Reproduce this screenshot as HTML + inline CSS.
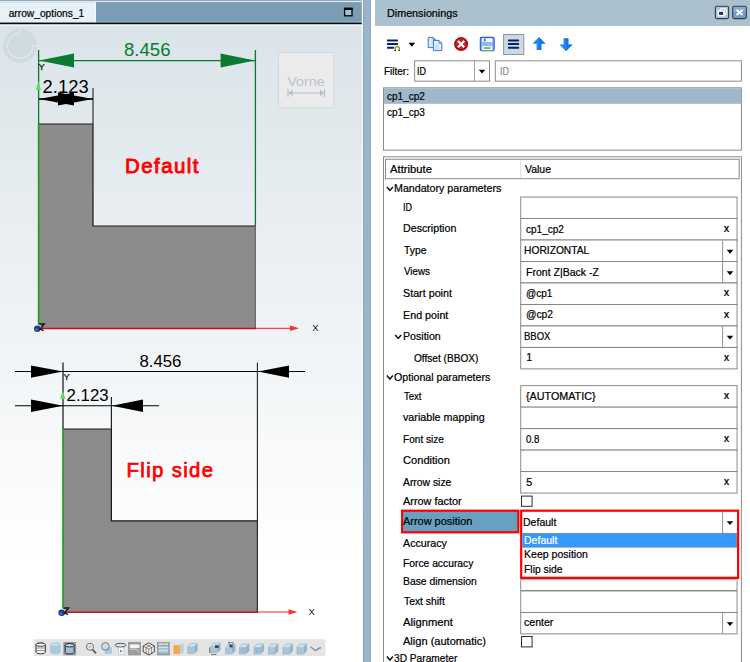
<!DOCTYPE html>
<html><head><meta charset="utf-8"><title>Dimensionings</title>
<style>
html,body{margin:0;padding:0;background:#fff;}
body{width:750px;height:662px;position:relative;overflow:hidden;font-family:"Liberation Sans",sans-serif;}
.t{position:absolute;white-space:nowrap;line-height:14px;font-family:"Liberation Sans",sans-serif;transform-origin:0 50%;-webkit-text-stroke:0.22px currentColor;}
.b{position:absolute;box-sizing:border-box;}
svg{position:absolute;left:0;top:0;}
</style></head><body>

<svg width="375" height="662" viewBox="0 0 375 662" font-family="Liberation Sans, sans-serif">
<defs>
<linearGradient id="bg" x1="0" y1="0" x2="0" y2="1">
<stop offset="0" stop-color="#dbe4e9"/>
<stop offset="0.84" stop-color="#ffffff"/>
<stop offset="1" stop-color="#ffffff"/>
</linearGradient>
</defs>
<!-- frame -->
<rect x="0" y="0" width="371" height="662" fill="#9ab5cb"/>
<rect x="0" y="0" width="362" height="1.2" fill="#8fa9bd"/>
<rect x="0" y="1.2" width="362" height="1" fill="#f4f8fa"/>
<rect x="0" y="2.2" width="362" height="20.6" fill="#7b9db3"/>
<rect x="0" y="2.2" width="95" height="20.6" fill="#e6f1f8"/>
<rect x="95" y="2.2" width="1" height="20.6" fill="#f4f8fa"/>
<rect x="96" y="21.7" width="266" height="1" fill="#a4c8e6"/>
<rect x="0" y="22.6" width="362" height="1.8" fill="#0a0a0a"/>
<rect x="0" y="24.4" width="362" height="1.6" fill="#f2f5f7"/>
<rect x="0" y="26" width="362" height="636" fill="url(#bg)"/>
<rect x="361.8" y="0" width="1.3" height="662" fill="#f4f8fa"/><rect x="363.1" y="0" width="1" height="662" fill="#89a7c0"/>
<rect x="370" y="0" width="1" height="662" fill="#8eabc3"/>
<rect x="371" y="0" width="4" height="662" fill="#ffffff"/>
<!-- maximize icon -->
<rect x="344.6" y="8.4" width="7.4" height="7.4" fill="#9fc4dc" stroke="#000" stroke-width="1.3"/>
<rect x="344" y="7.8" width="8.6" height="2.2" fill="#000"/>

<text x="8.7" y="16.8" font-size="10.7" fill="#000" stroke="#000" stroke-width="0.2" textLength="75.6" lengthAdjust="spacingAndGlyphs">arrow_options_1</text>
<circle cx="20" cy="45.9" r="17" fill="#cfdae1"/>
<path d="M20 28.9 V33.4 A12.5 12.5 0 1 0 32.5 45.9 H37" fill="none" stroke="#e2eaef" stroke-width="1.1"/>

<g>
<!-- gray L shape -->
<path d="M39 124 H93 V226 H255.5 V328 H39 Z" fill="#8c8c8c"/>
<path d="M39 124 H93 V226 H255.5" fill="none" stroke="#1a1a1a" stroke-width="1.2"/>
<line x1="255.3" y1="226" x2="255.3" y2="328" stroke="#555" stroke-width="1"/>
<!-- green ext lines -->
<line x1="38.6" y1="50" x2="38.6" y2="124" stroke="#0b7a30" stroke-width="1.3"/>
<line x1="38.6" y1="124" x2="38.6" y2="328" stroke="#15a015" stroke-width="1.6"/>
<line x1="255.4" y1="50" x2="255.4" y2="226" stroke="#0b7a30" stroke-width="1.3"/>
<line x1="39" y1="60.6" x2="255" y2="60.6" stroke="#0b7a30" stroke-width="1.2"/>
<path d="M39 60.6 L74 53.6 V67.6 Z" fill="#0b7a30"/>
<path d="M255 60.6 L220.6 53.6 V67.6 Z" fill="#0b7a30"/>
<text x="124" y="55.6" font-size="18.6" fill="#0b7a30">8.456</text>
<!-- y label, small green arrow -->
<text x="38.6" y="70" font-size="9.4" fill="#111" stroke="#111" stroke-width="0.25">Y</text>
<path d="M38.4 81 L35.8 90 H41 Z" fill="#5ae05a"/>
<!-- 2.123 -->
<text x="42.6" y="93" font-size="18.4" fill="#000">2.123</text>
<line x1="93" y1="88" x2="93" y2="124" stroke="#333" stroke-width="1.2"/>
<line x1="39" y1="99" x2="93" y2="99" stroke="#000" stroke-width="1.4"/>
<path d="M39 99 L74 92.4 V105.6 Z" fill="#000"/>
<path d="M93 99 L58 92.4 V105.6 Z" fill="#000"/>
<!-- red x axis -->
<line x1="39" y1="328.4" x2="256" y2="328.4" stroke="#c41212" stroke-width="1.5"/>
<line x1="256" y1="328.3" x2="291" y2="328.3" stroke="#ff4545" stroke-width="1.2"/>
<path d="M299 328.3 L290 325.5 V331.1 Z" fill="#ff3030"/>
<text x="312.2" y="331.4" font-size="9.5" fill="#111">X</text>
<!-- origin -->
<circle cx="37.3" cy="328.7" r="4.3" fill="#f4f7f9" opacity=".9"/><circle cx="37.3" cy="328.7" r="3.3" fill="#1f3a80"/><circle cx="36.7" cy="329.6" r="1.4" fill="#3a74c8"/><path d="M39.2 324.0 H44.2 L40.2 329.0 L43.6 330.7" fill="none" stroke="#16161c" stroke-width="1.4"/>
<text x="124.9" y="173.1" font-size="20.5" fill="#ff0000" stroke="#ff0000" stroke-width="0.9" stroke-linejoin="round" letter-spacing="1.45">Default</text>
</g>

<rect x="278.5" y="52.5" width="55.5" height="55.5" fill="#ebebeb" stroke="#d2d8dc" stroke-width="1"/>
<text x="287.4" y="86" font-size="13.6" fill="#bcc3ca" textLength="37.2" lengthAdjust="spacingAndGlyphs">Vorne</text>
<g stroke="#b4bfcc" stroke-width="1.2" fill="none">
<line x1="288" y1="93" x2="324.5" y2="93"/>
<line x1="288" y1="89" x2="288" y2="97"/>
<line x1="324.5" y1="89" x2="324.5" y2="97"/>
</g>
<path d="M288.6 93 l4 -3.2 v6.4 Z M324 93 l-4 -3.2 v6.4 Z" fill="#b4bfcc"/>

<g>
<path d="M63 429 H111.4 V520.8 H257.4 V612 H63 Z" fill="#8b8b8b"/>
<path d="M63 429 H111.4 V520.8 H257.4" fill="none" stroke="#1a1a1a" stroke-width="1.2"/>
<line x1="257.4" y1="362.4" x2="257.4" y2="612" stroke="#222" stroke-width="1.1"/>
<line x1="63" y1="362.4" x2="63" y2="429" stroke="#111" stroke-width="1.2"/>
<line x1="63" y1="429" x2="63" y2="612" stroke="#15a015" stroke-width="1.6"/>
<line x1="111.4" y1="397" x2="111.4" y2="429" stroke="#222" stroke-width="1.2"/>
<!-- dim line 1 -->
<line x1="15" y1="371.5" x2="305" y2="371.5" stroke="#000" stroke-width="1.1"/>
<path d="M63 371.5 L31 365.4 V377.8 Z" fill="#000"/>
<path d="M258 371.5 L289 365.4 V377.8 Z" fill="#000"/>
<text x="139.4" y="367" font-size="16.8" fill="#000">8.456</text>
<!-- dim line 2 -->
<line x1="15" y1="405.8" x2="159" y2="405.8" stroke="#000" stroke-width="1.1"/>
<path d="M63 405.8 L31 399.6 V412 Z" fill="#000"/>
<path d="M112 405.8 L143 399.6 V412 Z" fill="#000"/>
<text x="66.6" y="401.4" font-size="16.8" fill="#000">2.123</text>
<text x="63.6" y="380.2" font-size="9.4" fill="#111" stroke="#111" stroke-width="0.25">Y</text>
<path d="M62.8 390.6 L60.2 399 H65.4 Z" fill="#5ae05a"/>
<!-- red axis -->
<line x1="63" y1="612.3" x2="258" y2="612.3" stroke="#c41212" stroke-width="1.5"/>
<line x1="258" y1="612" x2="290" y2="612" stroke="#ff4545" stroke-width="1.2"/>
<path d="M297.5 612 L288.5 609.2 V614.8 Z" fill="#ff3030"/>
<text x="308.6" y="615.2" font-size="9.5" fill="#111">X</text>
<circle cx="61.7" cy="612.7" r="4.3" fill="#f4f7f9" opacity=".9"/><circle cx="61.7" cy="612.7" r="3.3" fill="#1f3a80"/><circle cx="61.1" cy="613.6" r="1.4" fill="#3a74c8"/><path d="M63.6 608.0 H68.6 L64.6 613.0 L68.0 614.7" fill="none" stroke="#16161c" stroke-width="1.4"/>
<text x="126.6" y="476.9" font-size="20.3" fill="#ff0000" stroke="#ff0000" stroke-width="0.75" stroke-linejoin="round" letter-spacing="1.35">Flip side</text>
</g>

<rect x="33.6" y="639.2" width="291.8" height="16.8" fill="#e4e4e4"/>
<path d="M36.0 644.7 V652.1 A4.7 1.7 0 0 0 45.4 652.1 V644.7 A4.7 1.7 0 0 0 36.0 644.7 Z" fill="#fafafa" stroke="#3a3a3a" stroke-width="1.0"/><ellipse cx="40.7" cy="644.7" rx="4.7" ry="1.7" fill="#fafafa" stroke="#3a3a3a" stroke-width="1.0"/>
<path d="M36.2 648 h9 M36.2 650.6 h9" stroke="#666" stroke-width=".7"/>
<path d="M50.6 644.7 V652.1 A4.8 1.7 0 0 0 60.2 652.1 V644.7 A4.8 1.7 0 0 0 50.6 644.7 Z" fill="#a9cbe0" stroke="#9bbdd4" stroke-width="0.6"/><ellipse cx="55.4" cy="644.7" rx="4.8" ry="1.7" fill="#c9deea" stroke="#9bbdd4" stroke-width="0.6"/>
<rect x="63.3" y="642" width="12.8" height="13.3" fill="#9a9a9a"/>
<path d="M65.2 645.3 V652.3 A4.5 1.7 0 0 0 74.2 652.3 V645.3 A4.5 1.7 0 0 0 65.2 645.3 Z" fill="#9ec0d8" stroke="#2e2e2e" stroke-width="1.0"/><ellipse cx="69.7" cy="645.3" rx="4.5" ry="1.7" fill="#c4dae8" stroke="#2e2e2e" stroke-width="1.0"/>
<circle cx="90" cy="646.8" r="3.5" fill="#eef2f4" stroke="#6a6a6a" stroke-width="1"/><path d="M92.6 649.6 L96 653.4" stroke="#555" stroke-width="1.6"/><path d="M88.2 646.8 h3.6 M90 645 v3.6" stroke="#999" stroke-width=".6"/>
<rect x="104.8" y="647.4" width="7" height="6.4" fill="#a9c9df"/><circle cx="105.4" cy="646.4" r="3.8" fill="#c9dce8" fill-opacity=".7" stroke="#7a7a7a" stroke-width="1"/>
<ellipse cx="120.4" cy="645.2" rx="5.4" ry="1.9" fill="none" stroke="#555" stroke-width="1"/><rect x="118.4" y="647.6" width="5.6" height="6.6" fill="#fdfdfd" stroke="#9ab" stroke-width=".5"/><path d="M120.2 649.6 l2.4 1.6 l-2.4 1.6 Z" fill="#3a7fc0"/>
<rect x="128" y="642" width="13" height="13.3" fill="#9a9a9a"/><rect x="129.8" y="644.4" width="9.6" height="3.6" fill="#f4f4f4"/><path d="M129.8 649.2 h7 M136.4 649.2 l3 3.4" stroke="#dcdcdc" stroke-width="1"/><rect x="129.6" y="651" width="5" height="2.6" fill="#a0a0a0"/>
<path d="M148.8 642.8 L154.4 646 V651.8 L148.8 655 L143.2 651.8 V646 Z" fill="#f2f2f2" stroke="#222" stroke-width=".8"/><path d="M143.2 646 L148.8 649.2 L154.4 646 M148.8 649.2 V655 M146 644.4 L151.6 647.6 V653.4 M151.6 644.4 L146 647.6 V653.4" fill="none" stroke="#333" stroke-width=".55"/>
<rect x="157" y="642" width="12.8" height="13.3" fill="#9a9a9a"/><rect x="158.6" y="643.2" width="9.6" height="1.6" fill="#d8e6ee"/><rect x="158.6" y="645.6" width="9.6" height="7.8" fill="#9fc3dc"/><path d="M158.6 647.4 h9.6 M158.6 650.6 h9.6" stroke="#dceaf2" stroke-width=".9"/><rect x="161.2" y="642.6" width="4.4" height=".9" fill="#e0a050"/>
<path d="M173.4 645.2 L176.6 643.2 H183.6 L180.4 645.2 Z" fill="#d6e6ef"/><path d="M173.4 645.2 H180.4 V654 H173.4 Z" fill="#f0a94e"/><path d="M180.4 645.2 L183.6 643.2 V652 L180.4 654 Z" fill="#b4d0e0"/>
<path d="M187.8 646.4 L190.8 643.4 H197.2 L194.2 646.4 Z" fill="#cfe2ee"/><path d="M187.8 646.4 H194.2 V653.4 H187.8 Z" fill="#a7c7db"/><path d="M194.2 646.4 L197.2 643.4 V650.4 L194.2 653.4 Z" fill="#8fb4cc"/><path d="M187.8 646.4 L190.8 643.4 H197.2 V650.4 L194.2 653.4 H187.8 Z" fill="none" stroke="#86a9c0" stroke-width=".6"/>
<path d="M210.6 646.3 L213.7 643.2 H220.2 L217.1 646.3 Z" fill="#cfe2ee"/><path d="M210.6 646.3 H217.1 V652.8 H210.6 Z" fill="#a7c7db"/><path d="M217.1 646.3 L220.2 643.2 V649.7 L217.1 652.8 Z" fill="#8fb4cc"/><path d="M210.6 646.3 L213.7 643.2 H220.2 V649.7 L217.1 652.8 H210.6 Z" fill="none" stroke="#86a9c0" stroke-width=".6"/>
<rect x="215" y="645.2" width="3.6" height="2.8" fill="#3c4650"/><path d="M209.6 647.4 v5.6 M211 654.6 h5.4" stroke="#555" stroke-width=".8"/>
<path d="M225.6 647.4 L228.6 644.4 H235.0 L232.0 647.4 Z" fill="#cfe2ee"/><path d="M225.6 647.4 H232.0 V653.8 H225.6 Z" fill="#a7c7db"/><path d="M232.0 647.4 L235.0 644.4 V650.8 L232.0 653.8 Z" fill="#8fb4cc"/><path d="M225.6 647.4 L228.6 644.4 H235.0 V650.8 L232.0 653.8 H225.6 Z" fill="none" stroke="#86a9c0" stroke-width=".6"/>
<rect x="229.4" y="644.6" width="3.4" height="2.8" fill="#3c4650"/><path d="M228 642.6 h5.4 v2 M229 641.8 v3" fill="none" stroke="#555" stroke-width=".6"/>
<path d="M239.4 647.1 L242.5 644.0 H249.0 L245.9 647.1 Z" fill="#cfe2ee"/><path d="M239.4 647.1 H245.9 V654.0 H239.4 Z" fill="#a7c7db"/><path d="M245.9 647.1 L249.0 644.0 V650.9 L245.9 654.0 Z" fill="#8fb4cc"/><path d="M239.4 647.1 L242.5 644.0 H249.0 V650.9 L245.9 654.0 H239.4 Z" fill="none" stroke="#86a9c0" stroke-width=".6"/>
<path d="M254.0 647.1 L257.1 644.0 H263.6 L260.5 647.1 Z" fill="#cfe2ee"/><path d="M254.0 647.1 H260.5 V654.0 H254.0 Z" fill="#a7c7db"/><path d="M260.5 647.1 L263.6 644.0 V650.9 L260.5 654.0 Z" fill="#8fb4cc"/><path d="M254.0 647.1 L257.1 644.0 H263.6 V650.9 L260.5 654.0 H254.0 Z" fill="none" stroke="#86a9c0" stroke-width=".6"/>
<path d="M268.4 647.1 L271.5 644.0 H278.0 L274.9 647.1 Z" fill="#cfe2ee"/><path d="M268.4 647.1 H274.9 V654.0 H268.4 Z" fill="#a7c7db"/><path d="M274.9 647.1 L278.0 644.0 V650.9 L274.9 654.0 Z" fill="#8fb4cc"/><path d="M268.4 647.1 L271.5 644.0 H278.0 V650.9 L274.9 654.0 H268.4 Z" fill="none" stroke="#86a9c0" stroke-width=".6"/>
<path d="M283.0 647.1 L286.1 644.0 H292.6 L289.5 647.1 Z" fill="#cfe2ee"/><path d="M283.0 647.1 H289.5 V654.0 H283.0 Z" fill="#a7c7db"/><path d="M289.5 647.1 L292.6 644.0 V650.9 L289.5 654.0 Z" fill="#8fb4cc"/><path d="M283.0 647.1 L286.1 644.0 H292.6 V650.9 L289.5 654.0 H283.0 Z" fill="none" stroke="#86a9c0" stroke-width=".6"/>
<path d="M297.0 647.1 L300.1 644.0 H306.6 L303.5 647.1 Z" fill="#cfe2ee"/><path d="M297.0 647.1 H303.5 V654.0 H297.0 Z" fill="#a7c7db"/><path d="M303.5 647.1 L306.6 644.0 V650.9 L303.5 654.0 Z" fill="#8fb4cc"/><path d="M297.0 647.1 L300.1 644.0 H306.6 V650.9 L303.5 654.0 H297.0 Z" fill="none" stroke="#86a9c0" stroke-width=".6"/>
<path d="M241.6 648.2 h3.2 v3.2 h-3.2 Z M256 648.2 h3.2 v3.2 h-3.2 Z" fill="none" stroke="#7fa3ba" stroke-width=".6"/>
<path d="M310.4 646.8 L315.4 650.6 L320.8 647.4" fill="none" stroke="#8096a5" stroke-width="1.3"/><path d="M317.6 649.3 L320.8 647.4" stroke="#5aa6d2" stroke-width="1.3"/>
</svg>

<div class="b" style="left:375.0px;top:0.0px;width:375.0px;height:25.5px;background:#abc2ce;"></div>
<div class="t" style="left:386.9px;top:5.89px;font-size:10.7px;color:#000;transform:scaleX(1.0074);">Dimensionings</div>
<svg width="750" height="662" viewBox="0 0 750 662" style="pointer-events:none">
<g id="hdrbtn">
<rect x="715.4" y="6.2" width="13.2" height="12.4" rx="1.6" fill="#a9c7e3" stroke="#3a3a3a" stroke-width="1.1"/>
<path d="M720.4 10.2 V8.8 H726.2 V14.2 H724.6" fill="none" stroke="#fff" stroke-width="1"/>
<rect x="718.3" y="11.1" width="5.6" height="4.5" fill="#12335e" stroke="#fff" stroke-width="1.5"/>
<rect x="732.7" y="6.2" width="13.6" height="12.4" rx="1.6" fill="#6f9dd0" stroke="#3a3a3a" stroke-width="1.1"/>
<rect x="733.4" y="6.9" width="12.2" height="5" fill="#8fb5de" opacity=".7"/>
<path d="M736.6 9.9 L742.6 15 M742.6 9.9 L736.6 15" stroke="#fff" stroke-width="1.9"/>
</g>
<g id="toolbar">
<!-- add list icon -->
<g fill="#0a1f6e"><rect x="386.9" y="39.5" width="11.1" height="1.9" rx=".6"/><rect x="386.9" y="43.1" width="11.1" height="1.9" rx=".6"/><rect x="386.9" y="46.8" width="7.4" height="1.9" rx=".6"/></g>
<circle cx="397.2" cy="48.6" r="3.3" fill="#fff"/>
<path d="M395.2 50.4 V48.5 A2 2 0 0 1 399.2 48.5 V50.4" fill="none" stroke="#8aaa14" stroke-width="1.6"/>
<rect x="394.5" y="49.9" width="1.5" height="1.1" fill="#2a2a1a"/><rect x="398.4" y="49.9" width="1.5" height="1.1" fill="#2a2a1a"/>
<path d="M408.5 42.8 h6.6 l-3.3 4 Z" fill="#000"/>
<!-- copy -->
<path d="M428.2 37.4 h5 l2.6 2.6 v7.6 h-7.6 Z" fill="#dbe9f8" stroke="#3f74d0" stroke-width="1"/>
<path d="M433.2 37.4 v2.6 h2.6" fill="none" stroke="#3f74d0" stroke-width=".8"/>
<path d="M433.4 40.4 h5.6 l2.8 2.8 v7.4 h-8.4 Z" fill="#e4effa" stroke="#3f74d0" stroke-width="1"/>
<path d="M439 40.4 v2.8 h2.8" fill="none" stroke="#3f74d0" stroke-width=".8"/>
<rect x="435" y="44" width="4" height="5.4" fill="#c6dbf2" opacity=".8"/>
<!-- delete -->
<circle cx="461.1" cy="44.1" r="7" fill="#a50e13"/>
<circle cx="461.1" cy="43.6" r="5.4" fill="#c4222a"/>
<path d="M458 41 L464.2 47.2 M464.2 41 L458 47.2" stroke="#fff" stroke-width="2.1"/>
<!-- save -->
<rect x="480.3" y="37.4" width="13.9" height="13.3" rx="1.4" fill="#7fb0ee" stroke="#2a5cc0" stroke-width="1.1"/>
<rect x="482" y="38.2" width="10.4" height="4" fill="#f2f7fd"/>
<rect x="484" y="38.6" width="1.5" height="2.8" fill="#2a5cc0"/>
<rect x="481.4" y="42.4" width="11.6" height="3.6" fill="#8fbaf2"/>
<rect x="482.2" y="46.2" width="10" height="4" fill="#fbfdff"/>
<rect x="483.8" y="47.2" width="6.8" height="1.8" fill="#86b81a"/>
<!-- list button -->
<rect x="503.6" y="34.5" width="20.2" height="20" fill="#cbdae3" stroke="#8e9499" stroke-width="1"/>
<g fill="#0a1f6e"><rect x="507.9" y="39.5" width="11.2" height="1.9" rx=".7"/><rect x="507.9" y="43.1" width="11.2" height="1.9" rx=".7"/><rect x="507.9" y="46.8" width="11.2" height="1.9" rx=".7"/></g>
<!-- up / down arrows -->
<path d="M539 37 L545.6 43.8 H541.4 V50 H536.6 V43.8 H532.4 Z" fill="#1e86f0"/>
<path d="M539 37 L545.6 43.8 H541.4 V50 H539 Z" fill="#0f6ad8" opacity=".55"/>
<path d="M566 51.3 L572.6 44.5 H568.4 V38.3 H563.6 V44.5 H559.4 Z" fill="#1e86f0"/>
<path d="M566 51.3 L572.6 44.5 H568.4 V38.3 H566 Z" fill="#0f6ad8" opacity=".55"/>
</g>
</svg>

<svg width="750" height="662" viewBox="0 0 750 662"><rect x="414.65" y="60.85" width="74.90" height="20.30" fill="#fff" stroke="#7d7d7d" stroke-width="0.9"/>
<rect x="474.00" y="61.00" width="0.90" height="20.00" fill="#9a9a9a"/>
<path d="M478.70 69.70 H485.30 L482.00 73.50 Z" fill="#000"/>
<rect x="495.25" y="60.85" width="246.10" height="20.30" fill="#fff" stroke="#7d7d7d" stroke-width="0.9"/>
<rect x="383.45" y="87.85" width="357.90" height="62.30" fill="#fff" stroke="#7d7d7d" stroke-width="0.9"/>
<rect x="383.90" y="88.30" width="357.00" height="15.50" fill="#9fb9cb"/>
<rect x="383.45" y="156.85" width="357.90" height="542.70" fill="#fff" stroke="#7d7d7d" stroke-width="0.9"/>
<rect x="385.45" y="159.25" width="353.70" height="19.50" fill="#fff" stroke="#7d7d7d" stroke-width="0.9"/>
<rect x="520.20" y="159.80" width="0.90" height="18.40" fill="#dedede"/>
<path d="M386.90 187.00 L389.90 190.40 L392.90 187.00" fill="none" stroke="#111" stroke-width="1.5"/>
<path d="M395.20 335.00 L398.20 338.40 L401.20 335.00" fill="none" stroke="#111" stroke-width="1.5"/>
<path d="M386.90 375.60 L389.90 379.00 L392.90 375.60" fill="none" stroke="#111" stroke-width="1.5"/>
<path d="M386.90 656.60 L389.90 660.00 L392.90 656.60" fill="none" stroke="#111" stroke-width="1.5"/>
<rect x="520.75" y="197.05" width="216.30" height="21.48" fill="#fff" stroke="#7d7d7d" stroke-width="0.9"/>
<rect x="520.75" y="218.53" width="216.30" height="21.48" fill="#fff" stroke="#7d7d7d" stroke-width="0.9"/>
<rect x="520.75" y="240.01" width="216.30" height="21.48" fill="#fff" stroke="#7d7d7d" stroke-width="0.9"/>
<rect x="722.20" y="240.46" width="0.90" height="20.58" fill="#858585"/>
<path d="M726.70 249.86 H733.30 L730.00 253.66 Z" fill="#000"/>
<rect x="520.75" y="261.49" width="216.30" height="21.48" fill="#fff" stroke="#7d7d7d" stroke-width="0.9"/>
<rect x="722.20" y="261.94" width="0.90" height="20.58" fill="#858585"/>
<path d="M726.70 271.34 H733.30 L730.00 275.14 Z" fill="#000"/>
<rect x="520.75" y="282.97" width="216.30" height="21.48" fill="#fff" stroke="#7d7d7d" stroke-width="0.9"/>
<rect x="520.75" y="304.45" width="216.30" height="21.48" fill="#fff" stroke="#7d7d7d" stroke-width="0.9"/>
<rect x="520.75" y="325.93" width="216.30" height="21.48" fill="#fff" stroke="#7d7d7d" stroke-width="0.9"/>
<rect x="722.20" y="326.38" width="0.90" height="20.58" fill="#858585"/>
<path d="M726.70 335.78 H733.30 L730.00 339.58 Z" fill="#000"/>
<rect x="520.75" y="347.41" width="216.30" height="21.48" fill="#fff" stroke="#7d7d7d" stroke-width="0.9"/>
<rect x="520.75" y="385.65" width="216.30" height="21.48" fill="#fff" stroke="#7d7d7d" stroke-width="0.9"/>
<rect x="520.75" y="407.13" width="216.30" height="21.48" fill="#fff" stroke="#7d7d7d" stroke-width="0.9"/>
<rect x="520.75" y="428.61" width="216.30" height="21.48" fill="#fff" stroke="#7d7d7d" stroke-width="0.9"/>
<rect x="520.75" y="450.09" width="216.30" height="21.48" fill="#fff" stroke="#7d7d7d" stroke-width="0.9"/>
<rect x="520.75" y="471.57" width="216.30" height="21.48" fill="#fff" stroke="#7d7d7d" stroke-width="0.9"/>
<rect x="521.50" y="496.10" width="10.60" height="10.20" fill="#fff" stroke="#2a2a2a" stroke-width="1.0"/>
<rect x="520.75" y="579.85" width="216.30" height="10.60" fill="#fff" stroke="#7d7d7d" stroke-width="0.9"/>
<rect x="521.20" y="580.30" width="215.40" height="1.50" fill="#e4f3fb"/>
<rect x="520.75" y="590.95" width="216.30" height="21.48" fill="#fff" stroke="#7d7d7d" stroke-width="0.9"/>
<rect x="520.75" y="612.43" width="216.30" height="21.48" fill="#fff" stroke="#7d7d7d" stroke-width="0.9"/>
<rect x="722.20" y="612.88" width="0.90" height="20.58" fill="#858585"/>
<path d="M726.70 622.28 H733.30 L730.00 626.08 Z" fill="#000"/>
<rect x="521.50" y="636.50" width="10.60" height="10.40" fill="#fff" stroke="#2a2a2a" stroke-width="1.0"/>
<rect x="401.00" y="509.60" width="118.40" height="23.80" fill="#ff0000"/>
<rect x="403.10" y="511.80" width="114.20" height="19.40" fill="#68a0bf"/>
<rect x="520.10" y="509.60" width="219.10" height="69.40" fill="#ff0000"/>
<rect x="522.30" y="511.80" width="214.70" height="64.90" fill="#fff"/>
<rect x="722.20" y="512.00" width="0.90" height="21.00" fill="#858585"/>
<path d="M726.70 521.30 H733.30 L730.00 525.10 Z" fill="#000"/>
<rect x="522.30" y="533.00" width="214.70" height="14.50" fill="#3399ff"/>
<path d="M522.6 533.3 H736.8 M522.6 547.2 H736.8 M736.7 533.3 V547.2" fill="none" stroke="#d08a3c" stroke-width=".9" stroke-dasharray="1 1"/></svg>
<div class="t" style="left:383.8px;top:63.89px;font-size:10.7px;color:#000;transform:scaleX(0.9346);">Filter:</div>
<div class="t" style="left:417.0px;top:63.89px;font-size:10.7px;color:#000;transform:scaleX(0.8411);">ID</div>
<div class="t" style="left:499.6px;top:63.89px;font-size:10.7px;color:#8c8c8c;transform:scaleX(0.8411);">ID</div>
<div class="t" style="left:387.2px;top:88.89px;font-size:10.7px;color:#000;transform:scaleX(0.9393);">cp1_cp2</div>
<div class="t" style="left:387.2px;top:105.29px;font-size:10.7px;color:#000;transform:scaleX(0.9393);">cp1_cp3</div>
<div class="t" style="left:389.6px;top:161.89px;font-size:10.7px;color:#000;transform:scaleX(1.0540);">Attribute</div>
<div class="t" style="left:524.6px;top:161.89px;font-size:10.7px;color:#000;transform:scaleX(0.9784);">Value</div>
<div class="t" style="left:394.2px;top:181.29px;font-size:10.7px;color:#000;transform:scaleX(0.9977);">Mandatory parameters</div>
<div class="t" style="left:403.2px;top:199.89px;font-size:10.7px;color:#000;transform:scaleX(0.8411);">ID</div>
<div class="t" style="left:403.2px;top:221.39px;font-size:10.7px;color:#000;transform:scaleX(0.9977);">Description</div>
<div class="t" style="left:404.0px;top:243.09px;font-size:10.7px;color:#000;transform:scaleX(0.9656);">Type</div>
<div class="t" style="left:403.6px;top:264.49px;font-size:10.7px;color:#000;transform:scaleX(0.9171);">Views</div>
<div class="t" style="left:403.2px;top:286.09px;font-size:10.7px;color:#000;transform:scaleX(1.0047);">Start point</div>
<div class="t" style="left:403.2px;top:307.69px;font-size:10.7px;color:#000;transform:scaleX(1.0041);">End point</div>
<div class="t" style="left:403.2px;top:329.29px;font-size:10.7px;color:#000;transform:scaleX(0.9930);">Position</div>
<div class="t" style="left:413.6px;top:350.89px;font-size:10.7px;color:#000;transform:scaleX(0.9445);">Offset (BBOX)</div>
<div class="t" style="left:394.2px;top:369.89px;font-size:10.7px;color:#000;transform:scaleX(0.9944);">Optional parameters</div>
<div class="t" style="left:404.0px;top:388.69px;font-size:10.7px;color:#000;transform:scaleX(0.8867);">Text</div>
<div class="t" style="left:403.2px;top:410.29px;font-size:10.7px;color:#000;transform:scaleX(1.0038);">variable mapping</div>
<div class="t" style="left:403.2px;top:431.89px;font-size:10.7px;color:#000;transform:scaleX(0.9444);">Font size</div>
<div class="t" style="left:403.2px;top:453.49px;font-size:10.7px;color:#000;transform:scaleX(1.0396);">Condition</div>
<div class="t" style="left:403.2px;top:475.09px;font-size:10.7px;color:#000;transform:scaleX(0.9691);">Arrow size</div>
<div class="t" style="left:403.2px;top:494.29px;font-size:10.7px;color:#000;transform:scaleX(1.0195);">Arrow factor</div>
<div class="t" style="left:403.2px;top:536.29px;font-size:10.7px;color:#000;transform:scaleX(0.9999);">Accuracy</div>
<div class="t" style="left:403.2px;top:555.69px;font-size:10.7px;color:#000;transform:scaleX(0.9625);">Force accuracy</div>
<div class="t" style="left:403.2px;top:574.29px;font-size:10.7px;color:#000;transform:scaleX(0.9693);">Base dimension</div>
<div class="t" style="left:404.0px;top:593.69px;font-size:10.7px;color:#000;transform:scaleX(0.9664);">Text shift</div>
<div class="t" style="left:403.2px;top:615.29px;font-size:10.7px;color:#000;transform:scaleX(1.0508);">Alignment</div>
<div class="t" style="left:403.2px;top:634.29px;font-size:10.7px;color:#000;transform:scaleX(1.0338);">Align (automatic)</div>
<div class="t" style="left:394.2px;top:650.89px;font-size:10.7px;color:#000;transform:scaleX(0.9519);">3D Parameter</div>
<div class="t" style="left:526.2px;top:200.09px;font-size:10.7px;color:#000;"></div>
<div class="t" style="left:526.2px;top:221.57px;font-size:10.7px;color:#000;transform:scaleX(0.9393);">cp1_cp2</div>
<div class="t" style="left:723.8px;top:221.81px;font-size:10px;color:#111;font-weight:bold;-webkit-text-stroke:0;">x</div>
<div class="t" style="left:523.6px;top:243.05px;font-size:10.7px;color:#000;transform:scaleX(0.9594);">HORIZONTAL</div>
<div class="t" style="left:526.2px;top:264.53px;font-size:10.7px;color:#000;transform:scaleX(0.9848);">Front Z|Back -Z</div>
<div class="t" style="left:526.2px;top:286.01px;font-size:10.7px;color:#000;transform:scaleX(0.9390);">@cp1</div>
<div class="t" style="left:723.8px;top:286.25px;font-size:10px;color:#111;font-weight:bold;-webkit-text-stroke:0;">x</div>
<div class="t" style="left:526.2px;top:307.49px;font-size:10.7px;color:#000;transform:scaleX(0.9604);">@cp2</div>
<div class="t" style="left:723.8px;top:307.74px;font-size:10px;color:#111;font-weight:bold;-webkit-text-stroke:0;">x</div>
<div class="t" style="left:523.6px;top:328.97px;font-size:10.7px;color:#000;transform:scaleX(0.8879);">BBOX</div>
<div class="t" style="left:526.2px;top:350.45px;font-size:10.7px;color:#000;">1</div>
<div class="t" style="left:723.8px;top:350.70px;font-size:10px;color:#111;font-weight:bold;-webkit-text-stroke:0;">x</div>
<div class="t" style="left:526.2px;top:388.69px;font-size:10.7px;color:#000;transform:scaleX(1.0062);">{AUTOMATIC}</div>
<div class="t" style="left:723.8px;top:388.94px;font-size:10px;color:#111;font-weight:bold;-webkit-text-stroke:0;">x</div>
<div class="t" style="left:526.2px;top:410.17px;font-size:10.7px;color:#000;"></div>
<div class="t" style="left:526.2px;top:431.65px;font-size:10.7px;color:#000;transform:scaleX(0.9009);">0.8</div>
<div class="t" style="left:723.8px;top:431.90px;font-size:10px;color:#111;font-weight:bold;-webkit-text-stroke:0;">x</div>
<div class="t" style="left:526.2px;top:453.13px;font-size:10.7px;color:#000;"></div>
<div class="t" style="left:526.2px;top:474.61px;font-size:10.7px;color:#000;">5</div>
<div class="t" style="left:723.8px;top:474.86px;font-size:10px;color:#111;font-weight:bold;-webkit-text-stroke:0;">x</div>
<div class="t" style="left:526.2px;top:593.99px;font-size:10.7px;color:#000;"></div>
<div class="t" style="left:523.6px;top:615.47px;font-size:10.7px;color:#000;transform:scaleX(0.9886);">center</div>
<div class="t" style="left:403.2px;top:514.29px;font-size:10.7px;color:#000;transform:scaleX(1.0236);">Arrow position</div>
<div class="t" style="left:523.4px;top:514.59px;font-size:10.7px;color:#000;transform:scaleX(0.9852);">Default</div>
<div class="t" style="left:523.6px;top:532.69px;font-size:10.7px;color:#fff;transform:scaleX(0.9852);">Default</div>
<div class="t" style="left:523.6px;top:547.29px;font-size:10.7px;color:#000;transform:scaleX(0.9870);">Keep position</div>
<div class="t" style="left:524.0px;top:561.69px;font-size:10.7px;color:#000;transform:scaleX(0.9688);">Flip side</div>
</body></html>
